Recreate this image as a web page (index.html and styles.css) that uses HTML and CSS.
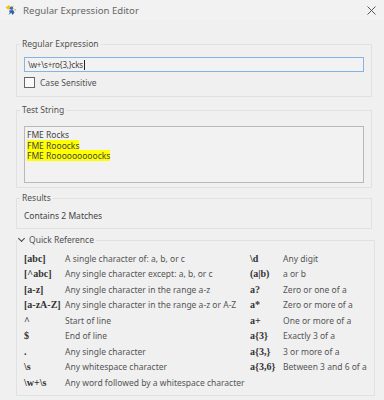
FILE: index.html
```html
<!DOCTYPE html>
<html lang="en">
<head>
    <meta charset="UTF-8">
    <title>Regular Expression Editor</title>
    <link rel="stylesheet" href="styles.css">
</head>
<body>
    <div class="window">
        <div class="titlebar">
            <svg class="app-icon" width="12" height="12" viewBox="0 0 12 12">
                <path d="M0.5 3.5 L4 1 L5.5 3 L9 1.5 L7 5 L3 5.5 Z" fill="#f3c21b"/>
                <circle cx="6.5" cy="4.2" r="1.7" fill="#3a6fc4"/>
                <path d="M4 6.5 L8 6 L9.5 8.5 L7.5 11 L6.3 8.8 L3.5 11 L4.8 8.5 Z" fill="#2d5fb0"/>
                <path d="M8 6 L11 5 L10.5 6.5 Z" fill="#e0a020"/>
            </svg>
            <span class="title">Regular Expression Editor</span>
            <svg class="close" width="9" height="9" viewBox="0 0 9 9">
                <path d="M0.5 0.5 L8.5 8.5 M8.5 0.5 L0.5 8.5" stroke="#555" stroke-width="1"/>
            </svg>
        </div>

        <div class="content">
            <fieldset class="group group-regex">
                <legend>Regular Expression</legend>
                <div class="input">\w+\s+ro{3,}cks<span class="caret"></span></div>
                <div class="check"><span class="box"></span>Case Sensitive</div>
            </fieldset>

            <fieldset class="group group-test">
                <legend>Test String</legend>
                <div class="textarea">
                    <div>FME Rocks</div>
                    <div><span class="hit">FME Rooocks</span></div>
                    <div><span class="hit">FME Rooooooooocks</span></div>
                </div>
            </fieldset>

            <fieldset class="group group-results">
                <legend>Results</legend>
                <div class="result">Contains 2 Matches</div>
            </fieldset>

            <fieldset class="group group-ref">
                <legend class="expander"><span class="chevron"></span>Quick Reference</legend>
                <div class="ref-grid">
                    <div class="code">[abc]</div><div class="desc">A single character of: a, b, or c</div>
                    <div class="code">\d</div><div class="desc">Any digit</div>

                    <div class="code">[^abc]</div><div class="desc">Any single character except: a, b, or c</div>
                    <div class="code">(a|b)</div><div class="desc">a or b</div>

                    <div class="code">[a-z]</div><div class="desc">Any single character in the range a-z</div>
                    <div class="code">a?</div><div class="desc">Zero or one of a</div>

                    <div class="code">[a-zA-Z]</div><div class="desc">Any single character in the range a-z or A-Z</div>
                    <div class="code">a*</div><div class="desc">Zero or more of a</div>

                    <div class="code">^</div><div class="desc">Start of line</div>
                    <div class="code">a+</div><div class="desc">One or more of a</div>

                    <div class="code">$</div><div class="desc">End of line</div>
                    <div class="code">a{3}</div><div class="desc">Exactly 3 of a</div>

                    <div class="code">.</div><div class="desc">Any single character</div>
                    <div class="code">a{3,}</div><div class="desc">3 or more of a</div>

                    <div class="code">\s</div><div class="desc">Any whitespace character</div>
                    <div class="code">a{3,6}</div><div class="desc">Between 3 and 6 of a</div>

                    <div class="code">\w+\s</div><div class="desc wide">Any word followed by a whitespace character</div>
                </div>
            </fieldset>
        </div>
    </div>
</body>
</html>
```

FILE: styles.css
```css
* { margin: 0; padding: 0; box-sizing: border-box; }

body {
    font-family: "Noto Sans", sans-serif;
    font-size: 8.5px;
    color: #555;
    background: #f0f0f0;
}

.window {
    width: 384px;
    height: 400px;
    background: #f0f0f0;
}

.titlebar {
    height: 20px;
    display: flex;
    align-items: center;
    padding: 0 6px 0 5px;
    gap: 6px;
    background: #f2f2f2;
}

.title {
    flex: 1;
    font-size: 9.6px;
    color: #666;
}

.close { margin-right: 2px; }

.content {
    padding: 18px 12px 0 16px;
}

.group {
    border: 1px solid #e1e1e1;
    padding: 0 7px;
    line-height: 12px;
}

.group legend {
    padding: 0 2px;
    margin-left: -4px;
    color: #505050;
    line-height: 12px;
}

.group-regex { padding-bottom: 8px; }
.group-test { margin-top: 7px; padding-bottom: 4px; }
.group-results { margin-top: 4px; padding-bottom: 6px; }
.group-ref { margin-top: 5px; padding-bottom: 4px; }

.input {
    margin-top: 7px;
    height: 15px;
    border: 1px solid #86b3e4;
    background: #f2f2f2;
    padding-left: 3px;
    line-height: 13px;
    font-size: 8px;
    letter-spacing: -0.2px;
    color: #444;
    display: flex;
    align-items: center;
}

.caret {
    width: 1px;
    height: 10px;
    margin-left: 1px;
    background: #222;
}

.check {
    margin-top: 5px;
    height: 11px;
    display: flex;
    align-items: center;
    gap: 5px;
    color: #505050;
}

.check .box {
    width: 11px;
    height: 11px;
    border: 1px solid #666;
    background: #fafafa;
}

.textarea {
    margin-top: 10px;
    height: 57px;
    border: 1px solid #b9b9b9;
    background: #f2f2f2;
    padding: 3px 2px;
    line-height: 10.5px;
    color: #444;
}

.hit { background: #ffff00; }

.result {
    margin-top: 6px;
    color: #444;
}

.expander {
    display: flex;
    align-items: center;
    gap: 5px;
}

.group .expander {
    margin-left: -7px;
    padding: 0 2px 0 1px;
}

.chevron {
    width: 5px;
    height: 5px;
    border-right: 1.3px solid #444;
    border-bottom: 1.3px solid #444;
    transform: translateY(-2px) rotate(45deg);
    margin-left: 1px;
}

.ref-grid {
    margin-top: 5px;
    display: grid;
    grid-template-columns: 41px 185px 33px 1fr;
    grid-auto-rows: 15.5px;
    align-items: center;
    white-space: nowrap;
}

.code {
    font-family: "Liberation Serif", serif;
    font-weight: bold;
    font-size: 10px;
    color: #333;
}

.desc { color: #555; }
.desc.wide { grid-column: 2 / 5; }
```
